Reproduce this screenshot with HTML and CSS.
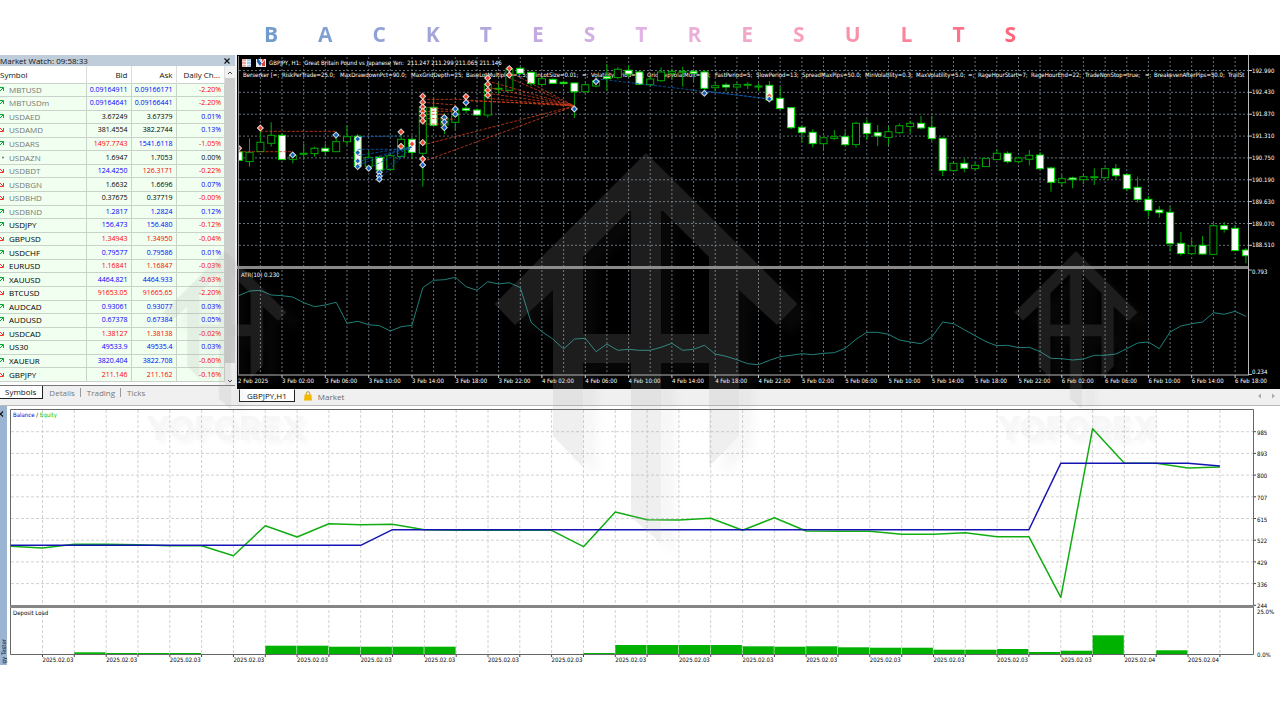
FILE: index.html
```html
<!DOCTYPE html>
<html lang="en">
<head>
<meta charset="utf-8">
<title>Backtest Results</title>
<link rel="stylesheet" href="styles.css">
</head>
<body>
<h1 class="title"><span class="title-text">BACKTESTRESULTS</span></h1>
<main class="stage">
  <div class="workspace">
    <section class="watch" aria-label="Market Watch">
      <header class="watch-bar"><span>Market Watch: 09:58:33</span><button class="close" aria-label="Close"><svg viewBox="0 0 6 6" width="6" height="6"><path d="M.5.5l5 5M5.5.5l-5 5" stroke="#111" stroke-width="1.2"/></svg></button></header>
      <div class="watch-body">
        <table class="quotes">
          <thead><tr><th class="sym">Symbol</th><th class="num">Bid</th><th class="num">Ask</th><th class="chg">Daily Ch...</th></tr></thead>
          <tbody id="quotes"></tbody>
        </table>
        <div class="scroll">
          <svg viewBox="0 0 10 12" width="10" height="12"><path d="M3 8l2-2 2 2" fill="none" stroke="#444"/></svg>
          <div class="thumb"></div>
          <svg viewBox="0 0 10 22" width="10" height="22"><path d="M3 17l2 2 2-2" fill="none" stroke="#444"/></svg>
        </div>
      </div>
      <nav class="watch-tabs">
        <button class="wtab active">Symbols</button><button class="wtab">Details</button><button class="wtab">Trading</button><button class="wtab">Ticks</button>
      </nav>
    </section>
    <section class="chart" aria-label="GBPJPY chart">
      <svg id="price" class="plot" viewBox="237 55 1043 334"></svg>
      <nav class="chart-tabs">
        <button class="ctab active">GBPJPY,H1</button>
        <button class="ctab"><svg viewBox="0 0 8 10" width="8" height="10"><path d="M2.2 4V2.5a1.8 1.8 0 0 1 3.6 0V4" fill="none" stroke="#c79a1b"/><path d="M.6 3.6h6.8l.6 5.8H0z" fill="#f5b800"/></svg>Market</button>
        <span class="pager"><svg viewBox="0 0 18 6" width="18" height="6"><path d="M3 .5v5L0 3zM14 .5v5L17 3z" fill="#aaa"/></svg></span>
      </nav>
    </section>
  </div>
  <section class="tester" aria-label="Strategy Tester">
    <div class="tester-side"><svg viewBox="0 0 6 6" width="6" height="6"><path d="M-2 .5l5 5M3 .5l-5 5" stroke="#111" stroke-width="1.2"/></svg><span>gy Tester</span></div>
    <svg id="tester" class="plot" viewBox="7 406 1273 259"></svg>
  </section>
  <svg class="watermark" viewBox="0 55 1280 611" aria-hidden="true">
    <defs>
      <path id="arrow" d="M0 0L151.500 151 131 172 93 137V283L63 314V210H15V390L-15 364V210H-63V314L-93 283V137L-131 172-151.500 151ZM-17 58L-63 104V181H-15V58ZM17 58L15 58V181H63V104Z"/>
    </defs>
    <g class="mark">
      <use href="#arrow" transform="translate(646 153)"/>
      <use href="#arrow" transform="translate(225 251) scale(.406)"/>
      <use href="#arrow" transform="translate(1076 251) scale(.406)"/>
    </g>
    <g class="mark-text"><text x="226" y="440">YOFOREX</text><text x="1077" y="440">YOFOREX</text></g>
  </svg>
</main>
<script src="app.js"></script>
</body>
</html>
```
FILE: styles.css
```css
* { box-sizing: border-box; }
body { margin: 0; background: #fff; font-family: "Open Sans", "Noto Sans", sans-serif; color: #111; overflow-x: hidden; }
button { font: inherit; background: none; border: 0; padding: 0; margin: 0; color: inherit; }
.title { margin: 0; height: 55px; padding-top: 14px; text-align: center; font-size: 21px; line-height: 41px; font-weight: 700; }
.title-text { display: inline-block; margin-right: -40px; letter-spacing: 40px; color: transparent; background: linear-gradient(90deg, #6f9ccc, #b7a8e0 30%, #e4b4e6 49%, #f8a0b8 68%, #ff6378 95%); -webkit-background-clip: text; background-clip: text; }
.stage { position: relative; overflow: hidden; }
.workspace { display: grid; grid-template-columns: 237px 1fr; background: #f0f0f0; padding-bottom: 1px; border-bottom: 1px solid #b8b8b8; }
.plot { display: block; width: 100%; height: auto; }

.watch { display: flex; flex-direction: column; margin-left: -4px; margin-right: 2px; font-size: 8px; background: #f0f0f0; }
.watch-bar { display: flex; justify-content: space-between; align-items: center; height: 11px; padding: 0 5px 0 4px; background: #bfcddb; line-height: 11px; }
.close { display: flex; }
.watch-body { display: flex; border-bottom: 1px solid #777; height: 320px; background: #fff; }
.quotes { flex: 1; border-collapse: collapse; table-layout: fixed; height: 316px; background: #f0fff0; }
.quotes th { font-weight: 400; height: 17px; background: #fff; padding: 0; text-align: right; border-right: 1px solid #ddd; }
.quotes .sym { width: 90px; text-align: left; padding-left: 4px; }
.quotes .num { width: 45px; padding-right: 3px; }
.quotes .chg { padding-right: 4px; }
.quotes td { height: 13px; padding: 0 3px 0 0; line-height: 10px; text-align: right; border: 1px solid #c9d2c9; border-left: 0; font-size: 7px; color: #000; }
.quotes td.name { text-align: left; font-size: 8px; padding-left: 2px; }
.quotes td.name svg { margin-right: 4px; }
.quotes td.dim { color: #777; }
.quotes td.up { color: #00f; }
.quotes td.down { color: #f00; }
.scroll { flex: none; display: flex; flex-direction: column; width: 10px; background: #f0f0f0; }
.thumb { flex: 1; background: #cdcdcd; }
.watch-tabs { display: flex; align-items: center; height: 13px; line-height: 12px; color: #777; }
.wtab { padding: 0 5px 0 6px; border-right: 1px solid #999; line-height: 9px; }
.wtab:last-child { border-right: 0; }
.wtab.active { color: #111; background: #fff; border: solid #222; border-width: 0 1px 1px 0; line-height: 12px; padding: 0 6px 0 9px; }

.chart { min-width: 0; }
.chart-tabs { display: flex; align-items: center; height: 14px; margin-bottom: 1px; padding: 0 4px 0 2px; font-size: 8px; color: #666; }
.ctab { display: flex; align-items: center; gap: 6px; padding: 0 0 0 9px; }
.ctab.active { align-self: flex-start; height: 13px; padding: 0 7px; color: #111; background: #fff; border: 1px solid #222; border-top-color: #fff; }
.pager { margin-left: auto; display: flex; }

.tester { display: grid; grid-template-columns: 7px 1fr; background: #fff; }
.tester-side { display: flex; flex-direction: column; justify-content: space-between; padding-top: 5px; background: #9bb4d2; font: 6px "DejaVu Sans Condensed", "DejaVu Sans", sans-serif; line-height: 7px; }
.tester-side span { writing-mode: vertical-rl; transform: rotate(180deg); white-space: nowrap; padding-top: 2px; }

.label, .scale, .ink { font: 6px "DejaVu Sans Condensed", "DejaVu Sans", sans-serif; fill: #fff; }
.ink { fill: #000; }
.blue-ink { fill: #00c; }
.green-ink { fill: #0c0; }
.watermark { position: absolute; left: 0; top: 0; width: 100%; pointer-events: none; }
.mark { fill: #a3a3a3; fill-rule: evenodd; opacity: .18; filter: drop-shadow(14px 10px 5px rgba(120, 120, 120, .35)); }
.mark-text { font: 800 33px Inter, sans-serif; text-anchor: middle; fill: #999; opacity: .08; filter: drop-shadow(4px 4px 2px rgba(0, 0, 0, .4)); }
```
FILE: app.js
```js
const quotes = `u MBTUSD 0.09164911 0.09166171 -2.20 b b
u MBTUSDm 0.09164641 0.09166441 -2.20 b b
u USDAED 3.67249 3.67379 0.01 k k
d USDAMD 381.4554 382.2744 0.13 k k
u USDARS 1497.7743 1541.6118 -1.05 r b
n USDAZN 1.6947 1.7053 0.00 k k
d USDBDT 124.4250 126.3171 -0.22 b r
d USDBGN 1.6632 1.6696 0.07 k k
d USDBHD 0.37675 0.37719 -0.00 k k
u USDBND 1.2817 1.2824 0.12 b b
u USDJPY 156.473 156.480 -0.12 b b
d GBPUSD 1.34943 1.34950 -0.04 r r
u USDCHF 0.79577 0.79586 0.01 b b
d EURUSD 1.16841 1.16847 -0.03 r r
u XAUUSD 4464.821 4464.933 -0.63 b b
d BTCUSD 91653.05 91665.65 -2.20 r r
u AUDCAD 0.93061 0.93077 0.03 b b
u AUDUSD 0.67378 0.67384 0.05 b b
d USDCAD 1.38127 1.38138 -0.02 r r
u US30 49533.9 49535.4 0.03 b b
u XAUEUR 3820.404 3822.708 -0.60 b b
d GBPJPY 211.146 211.162 -0.16 r r`.split('\n').map(r => r.split(' '));
const tone = { b: 'up', r: 'down', k: '' };
const icons = {
  u: '<path d="M1 6l4-4M2 1.500h3.500V5" stroke="#0a3" fill="none"/>',
  d: '<path d="M1 1l4 4M5.500 2v3.500H2" stroke="#e33" fill="none"/>',
  n: '<circle cx="5" cy="3.500" r="1" fill="#777"/>'
};
document.getElementById('quotes').innerHTML = quotes.map(([dir, name, bid, ask, chg, bt, at], i) =>
  `<tr><td class="name${i < 10 ? ' dim' : ''}"><svg viewBox="0 0 7 7" width="7" height="7">${icons[dir]}</svg>${name}</td>` +
  `<td class="${tone[bt]}">${bid}</td><td class="${tone[at]}">${ask}</td>` +
  `<td class="${chg[0] === '-' ? 'down' : chg === '0.00' ? '' : 'up'}">${chg}%</td></tr>`).join('');

const line = (x1, y1, x2, y2, extra) => `<line x1="${x1}" y1="${y1}" x2="${x2}" y2="${y2}" ${extra}/>`;
const text = (x, y, cls, s) => `<text x="${x}" y="${y}" class="${cls}" xml:space="preserve">${s}</text>`;

// Candles: high, low, body top, body bottom, 1 = bearish; three units per pixel
const candles = [
[300,331,305,331,1],[265,350,307,335,0],[240,305,277,305,0],[217,290,256,280,0],[250,330,256,329,1],[305,340,316,328,0],[280,330,310,313,0],[290,320,295,311,0],[280,318,295,304,1],[260,305,275,305,0],
[226,285,260,275,0],[252,355,259,350,1],[303,355,322,349,0],[318,390,322,360,1],[312,362,317,358,0],[240,320,268,320,0],[268,328,268,307,1],[140,410,172,310,0],[143,227,172,226,1],[190,252,205,225,0],
[165,240,180,217,0],[150,190,175,181,1],[175,198,180,195,1],[85,203,103,195,0],[98,130,115,118,0],[50,122,58,121,0],[50,75,55,70,1],[65,108,67,101,1],[80,105,86,103,0],[85,102,88,100,1],
[92,104,97,101,1],[98,204,99,125,1],[98,128,104,125,0],[80,112,92,108,0],[42,122,80,86,1],[52,88,58,83,0],[45,80,61,72,1],[62,104,66,103,1],[80,108,87,104,0],[52,95,66,92,0],
[57,90,64,70,0],[50,110,64,66,0],[60,95,64,70,1],[60,125,66,115,1],[95,123,107,113,0],[98,124,105,111,1],[98,118,104,111,0],[97,117,103,105,0],[100,123,108,111,0],[93,155,106,150,1],
[110,178,145,176,1],[172,238,173,233,1],[226,278,232,248,1],[238,292,247,281,1],[262,299,263,281,0],[240,270,260,265,0],[242,285,260,284,1],[215,293,220,284,0],[208,270,220,251,1],[225,288,248,258,1],
[229,285,245,262,0],[220,252,227,248,0],[212,250,220,230,0],[198,238,220,234,1],[197,275,232,266,1],[262,378,265,362,1],[338,365,340,362,0],[326,367,340,355,1],[338,360,346,356,0],[325,350,325,350,0],
[298,330,310,329,0],[304,340,310,335,1],[320,340,324,335,0],[300,346,316,328,0],[306,358,315,356,1],[350,425,354,397,1],[375,410,386,398,0],[380,415,384,389,1],[375,403,380,389,0],[355,405,380,383,0],
[352,384,356,383,0],[342,388,356,377,1],[370,423,374,416,1],[380,458,412,449,1],[438,500,448,482,1],[468,503,480,488,1],[470,605,487,581,1],[546,617,580,611,1],[566,614,588,611,0],[558,615,586,612,1],
[520,614,527,613,0],[516,548,527,538,1],[526,604,535,602,1],[594,640,600,617,1]];
const atr = [107,93,91,105,107,111,128,140,135,127,190,184,194,197,213,200,196,83,61,59,52,80,91,65,72,68,83,187,215,237,267,237,235,275,252,271,268,271,271,262,250,271,268,256,282,289,299,311,314,301,290,286,281,284,280,278,265,238,217,217,223,240,246,251,231,186,191,209,227,245,257,256,263,262,275,295,296,300,297,286,286,282,266,249,246,266,216,198,191,186,158,163,154,169];
const bx = i => +(238.7 + 10.83 * i).toFixed(1);
const py = v => +(50 + v / 3).toFixed(1);
const mx = v => +(236 + v / 3).toFixed(1);

let p = '<rect x="237" y="55" width="1043" height="334" fill="#000"/>';
const grid = 'stroke="#63717d" stroke-width="1" stroke-dasharray="2 2"';
for (let k = 0; k < 46; k++) {
  p += line(bx(2 + 2 * k), 57, bx(2 + 2 * k), 266, grid);
  p += line(bx(2 + 2 * k), 270, bx(2 + 2 * k), 374, grid);
}
['192.990','192.430','191.870','191.310','190.750','190.190','189.630','189.070','188.510'].forEach((s, k) => {
  const y = +(70.5 + 21.85 * k).toFixed(1);
  p += line(239, y, 1249, y, grid) + line(1249, y, 1252, y, 'stroke="#ccc"') + text(1252, y + 2, 'scale', s);
});
p += '<g clip-path="url(#plotclip)"><clipPath id="plotclip"><rect x="239" y="57" width="1010" height="320"/></clipPath>';
p += text(269, 65, 'label', 'GBPJPY, H1:  Great Britain Pound vs Japanese Yen:  211.247 211.299 211.065 211.146');
const params = [[243,'Berserker [=;'],[282,'RiskPerTrade=25.0;'],[340,'MaxDrawdownPct=90.0;'],[411,'MaxGridDepth=25;'],[466,'BaseLotMultiplier=1.5;'],[531,'MinLotSize=0.01;'],[582,'=;'],[591,'VolatilityPeriod=14;'],[647,'GridStepVolatMult=0.8;'],[715,'FastPeriod=5;'],[756,'SlowPeriod=13;'],[802,'SpreadMaxPips=50.0;'],[865,'MinVolatility=0.3;'],[916,'MaxVolatility=5.0;'],[968,'=;'],[978,'RageHourStart=7;'],[1031,'RageHourEnd=22;'],[1085,'TradeNonStop=true;'],[1145,'=;'],[1154,'BreakevenAfterPips=50.0;'],[1228,'TrailSt']];
p += `<text y="77" class="scale">${params.map(([x, s]) => `<tspan x="${x}">${s}</tspan>`).join(' ')}</text>`;
candles.forEach(([h, l, t, b, bear], i) => {
  const x = bx(i), fill = bear ? '#fff' : '#000';
  p += line(x, py(h), x, py(l), 'stroke="#00a800"');
  p += `<rect x="${(x - 3.5).toFixed(1)}" y="${py(t)}" width="7" height="${Math.max(1, (b - t) / 3).toFixed(1)}" fill="${fill}" stroke="${bear ? '#00e000' : '#00a800'}"/>`;
});
const red = [[8,305,170,305],[73,244,300,244],[560,148,690,148],[560,157,658,165],[560,171,658,181],[560,184,658,184],[560,193,625,193],[560,205,658,208],[560,222,625,222],[560,285,1015,168],[560,335,1015,168],[690,150,1015,168],[690,152,1015,165],[755,93,1015,168],[755,112,1015,168],[755,130,1015,168],[755,145,1015,168],[820,65,1015,168],[820,84,1015,168],[495,298,528,290]];
const blue = [[365,260,495,258],[365,298,528,298],[365,317,528,290],[365,335,528,290],[365,345,528,290],[398,355,528,290],[430,370,528,290],[430,388,528,290],[1080,86,1600,147],[1405,122,1600,147]];
red.forEach(a => p += line(mx(a[0]), py(a[1]), mx(a[2]), py(a[3]), 'stroke="#d63f1c" stroke-width=".8" stroke-dasharray="3 1.500"'));
blue.forEach(a => p += line(mx(a[0]), py(a[1]), mx(a[2]), py(a[3]), 'stroke="#0a5cb0" stroke-width=".8" stroke-dasharray="3 1.500"'));
const mark = (x, y, c) => `<path d="M${mx(x)} ${py(y - 10)}l3.300 3.300-3.300 3.300-3.300-3.300z" fill="#e8e4e4" stroke="#e8e4e4" stroke-width=".6"/><path d="M${mx(x)} ${py(y - 7)}l2.200 2.300-2.200 2.300-2.200-2.300z" fill="${c}"/>`;
[[8,295],[73,234],[495,246],[495,289],[528,282],[560,139],[560,157],[560,171],[560,184],[560,197],[560,213],[560,278],[560,327],[690,140],[755,84],[755,103],[755,121],[755,136],[820,56],[820,75],[1600,138]].forEach(m => p += mark(m[0], m[1], '#f04020'));
[[170,315],[300,255],[365,267],[365,308],[365,333],[365,350],[398,355],[430,367],[430,378],[430,388],[560,345],[625,203],[625,216],[625,233],[658,177],[658,193],[690,158],[1015,177],[1080,95],[1405,130],[1600,147]].forEach(m => p += mark(m[0], m[1], '#1060c0'));
p += '</g><rect x="242" y="59" width="9" height="8" fill="#eee"/><path d="M242 59h4v8h-4z" fill="#f0aaa5"/><path d="M247 59h4v8h-4z" fill="#a8cdea"/><path d="M242 61.500h9M242 64.500h9M246.500 59v8" stroke="#fff" stroke-width=".6"/>';
p += '<rect x="256" y="59" width="10" height="8" fill="#eee"/><path d="M257 59h3l2 4-2 3-3-4z" fill="#1c62ae"/><path d="M262 59h3v7h-3z" fill="#d8453b"/><path d="M259 59l3 4 3-4" fill="none" stroke="#fff"/>';
p += '<rect x="237" y="266" width="1012" height="3" fill="#8a8888"/>';
p += text(241, 277, 'label', 'ATR(10) 0.230');
p += `<polyline points="${atr.map((v, i) => bx(i) + ',' + (260 + v / 3).toFixed(1)).join(' ')}" fill="none" stroke="#1d8079"/>`;
p += line(1248.5, 55, 1248.5, 375, 'stroke="#bbb"') + line(238, 375, 1249, 375, 'stroke="#bbb"') + line(238.5, 56, 238.5, 375, 'stroke="#888"');
p += line(1249, 270, 1252, 270, 'stroke="#bbb"') + line(1249, 374.5, 1252, 374.5, 'stroke="#bbb"');
p += text(1252, 274, 'scale', '0.793') + text(1252, 374, 'scale', '0.234');
const hours = ['02', '06', '10', '14', '18', '22'];
p += text(238, 383, 'scale', '2 Feb 2025');
for (let k = 1; k < 24; k++) {
  const x = bx(4 * k), n = k - 1;
  p += line(x, 375, x, 378, 'stroke="#ccc"') + text(x, 383, 'scale', `${3 + Math.floor(n / 6)} Feb ${hours[n % 6]}:00`);
}
document.getElementById('price').innerHTML = p;

// Balance and equity share one scale; three units per pixel
const equity = [439,444,433,433,434,437,437,467,377,411,371,374,373,389,391,391,391,391,440,336,359,360,355,391,353,393,394,394,403,403,398,410,410,592,86,190,190,204,201];
const balance = equity.map((_, k) => k < 12 ? 436 : k < 33 ? 389 : k < 38 ? 190 : 198);
const load = { 2:757,3:759,4:759,5:759,8:737,9:737,10:740,11:740,12:740,13:740,18:759,19:735,20:735,21:735,22:735,23:739,24:740,25:739,26:742,27:743,28:743,29:749,30:749,31:747,32:756,33:752,34:706,36:751 };
const tx = k => +(10.7 + 31.82 * k).toFixed(1);
const ty = v => +(400 + v / 3).toFixed(1);
const soft = 'stroke="#d2d2d2" stroke-dasharray="3 2"';
let t = '';
for (let k = 1; k < 39; k++) t += line(tx(k), 410, tx(k), 655, soft) + line(tx(k), 655, tx(k), 657, 'stroke="#444"');
['985','893','800','707','615','522','429','336','244'].forEach((s, k) => {
  const y = +(431.7 + 21.7 * k).toFixed(1);
  if (k < 8) t += line(11, y, 1254, y, soft);
  t += line(1254, y, 1256, y, 'stroke="#444"') + text(1257, (y + 3).toFixed(1), 'ink', s);
});
t += '<path d="M10.500 654.500V409.500H1253.500V654.500Z" fill="none" stroke="#666"/><rect x="10" y="605" width="1244" height="3" fill="#858585"/>';
Object.entries(load).forEach(([k, v]) => t += `<rect x="${tx(+k)}" y="${ty(v)}" width="31.200" height="${(654 - ty(v)).toFixed(1)}" fill="#00b200"/>`);
const path = (a, c) => `<polyline points="${a.map((v, k) => tx(k) + ',' + ty(v)).join(' ')}" fill="none" stroke="${c}" stroke-width="1.500" stroke-linejoin="round"/>`;
t += path(equity, '#12ad12') + path(balance, '#1414b4');
t += `<text x="13" y="417" class="ink"><tspan class="blue-ink">Balance</tspan> / <tspan class="green-ink">Equity</tspan></text>` + text(13, 615, 'ink', 'Deposit Load');
t += text(1257, 614, 'ink', '25.0%') + text(1257, 657, 'ink', '0.0%');
for (let k = 1; k < 39; k += 2) t += text(tx(k), 662, 'ink', k < 35 ? '2025.02.03' : '2025.02.04');
document.getElementById('tester').innerHTML = t;
```
